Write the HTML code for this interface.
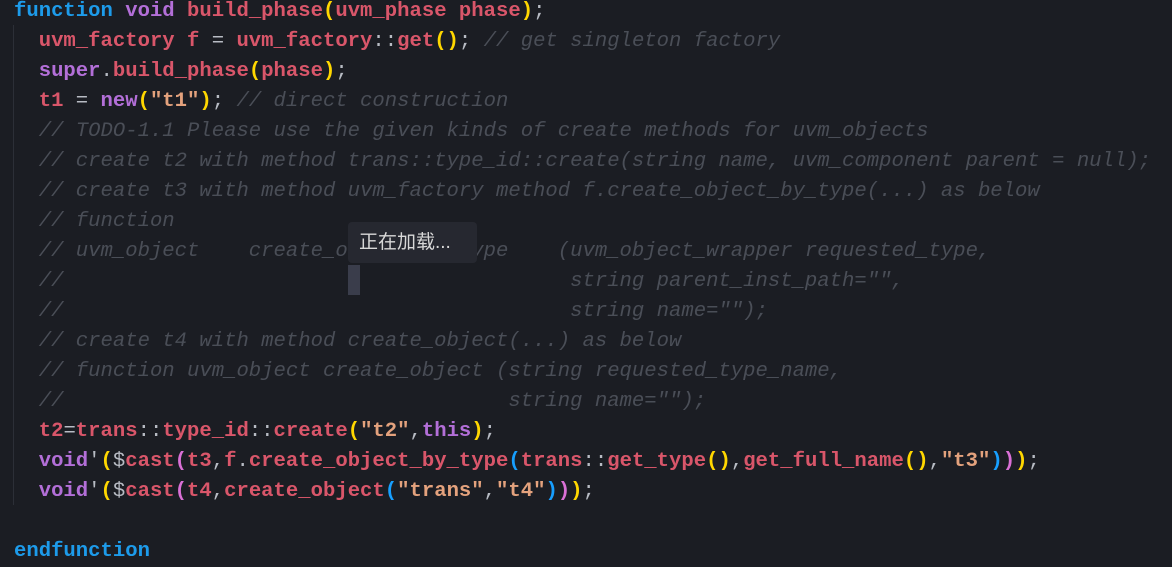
<!DOCTYPE html>
<html><head><meta charset="utf-8"><style>
html,body{margin:0;padding:0;background:#1b1d23;width:1172px;height:564px;overflow:hidden}
.c{position:absolute;left:14px;top:-3px;font-family:"Liberation Mono",monospace;font-size:20.6px;line-height:30px;white-space:pre;color:#d9566a;font-weight:bold}
.k{color:#1d9bea}.p{color:#b36fd8}.r{color:#d9566a}.o{color:#b8bcc4;font-weight:normal}
.s{color:#e4a27d}.m{color:#4a4e57;font-style:italic;font-weight:normal}
.y{color:#ffd700}.v{color:#da70d6}.b{color:#179fff}
.g{position:absolute;left:13px;top:25px;width:1px;height:480px;background:#2c2f37}
.tip{position:absolute;left:348px;top:222px;width:129px;height:41px;background:#262830;border-radius:4px;color:#d8d8d8;font-family:"Liberation Sans","Noto Sans CJK SC",sans-serif;font-size:19px;line-height:41px;padding-left:11px;box-sizing:border-box}
.cur{position:absolute;left:348px;top:265px;width:12px;height:30px;background:#3a3d4b}
</style></head><body>
<div class="g"></div>
<div class="c"><span class="k">function</span> <span class="p">void</span> build_phase<span class="y">(</span>uvm_phase phase<span class="y">)</span><span class="o">;</span>
  uvm_factory f <span class="o">=</span> uvm_factory<span class="o">::</span>get<span class="y">()</span><span class="o">;</span> <span class="m">// get singleton factory</span>
  <span class="p">super</span><span class="o">.</span>build_phase<span class="y">(</span>phase<span class="y">)</span><span class="o">;</span>
  t1 <span class="o">=</span> <span class="p">new</span><span class="y">(</span><span class="s">"t1"</span><span class="y">)</span><span class="o">;</span> <span class="m">// direct construction</span>
  <span class="m">// TODO-1.1 Please use the given kinds of create methods for uvm_objects</span>
  <span class="m">// create t2 with method trans::type_id::create(string name, uvm_component parent = null);</span>
  <span class="m">// create t3 with method uvm_factory method f.create_object_by_type(...) as below</span>
  <span class="m">// function</span>
  <span class="m">// uvm_object    create_object_by_type    (uvm_object_wrapper requested_type,</span>
  <span class="m">//                                         string parent_inst_path="",</span>
  <span class="m">//                                         string name="");</span>
  <span class="m">// create t4 with method create_object(...) as below</span>
  <span class="m">// function uvm_object create_object (string requested_type_name,</span>
  <span class="m">//                                    string name="");</span>
  t2<span class="o">=</span>trans<span class="o">::</span>type_id<span class="o">::</span>create<span class="y">(</span><span class="s">"t2"</span><span class="o">,</span><span class="p">this</span><span class="y">)</span><span class="o">;</span>
  <span class="p">void</span><span class="o">'</span><span class="y">(</span><span class="o">$</span>cast<span class="v">(</span>t3<span class="o">,</span>f<span class="o">.</span>create_object_by_type<span class="b">(</span>trans<span class="o">::</span>get_type<span class="y">()</span><span class="o">,</span>get_full_name<span class="y">()</span><span class="o">,</span><span class="s">"t3"</span><span class="b">)</span><span class="v">)</span><span class="y">)</span><span class="o">;</span>
  <span class="p">void</span><span class="o">'</span><span class="y">(</span><span class="o">$</span>cast<span class="v">(</span>t4<span class="o">,</span>create_object<span class="b">(</span><span class="s">"trans"</span><span class="o">,</span><span class="s">"t4"</span><span class="b">)</span><span class="v">)</span><span class="y">)</span><span class="o">;</span>

<span class="k">endfunction</span></div>
<div class="tip">正在加载...</div>
<div class="cur"></div>
</body></html>
